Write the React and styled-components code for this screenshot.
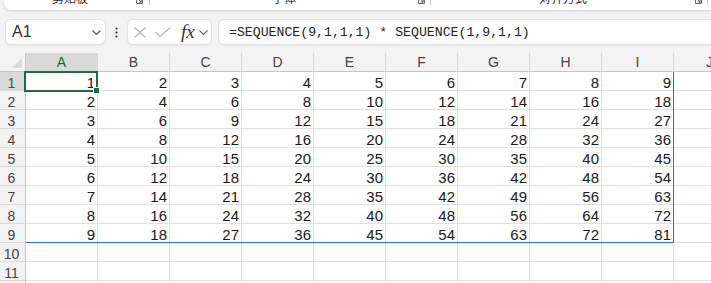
import React from 'react'
import styled, { createGlobalStyle } from 'styled-components'

const GlobalStyle = createGlobalStyle`
  html, body {
    margin: 0;
    padding: 0;
    background: #f3f3f3;
    overflow: hidden;
  }
  body {
    font-family: "Liberation Sans", Arial, sans-serif;
  }
`

const Page = styled.div`
  width: 711px;
  height: 283px;
  overflow: hidden;
  background: #f3f3f3;
`

/* ribbon, only its lower edge shows */
const Ribbon = styled.div`
  display: flex;
  width: 760px;
  height: 10px;
  margin-left: 4px;
  background: #fff;
  border-radius: 0 0 0 7px;
  box-shadow: 0 1px 3px rgba(0, 0, 0, 0.14);
  overflow: hidden;
`
const RibbonGroup = styled.div`
  display: flex;
  align-items: flex-start;
  flex-shrink: 0;
  width: ${p => p.$width}px;
`
const GroupLabel = styled.span`
  flex: 1;
  margin-top: -8px;
  text-align: center;
  font-family: "Noto Sans CJK SC", "Liberation Sans", sans-serif;
  font-size: 12px;
  line-height: 12px;
  color: #333;
`
const Launcher = styled.svg`
  flex-shrink: 0;
  width: 7px;
  height: 7px;
  margin-top: -3px;
  margin-right: ${p => p.$right}px;
`
const GroupDivider = styled.div`
  flex-shrink: 0;
  width: 1px;
  height: 5px;
  background: #c9c9c9;
`

/* formula bar */
const FormulaBar = styled.div`
  display: flex;
  align-items: center;
  height: 26px;
  margin-top: 9px;
  padding-left: 5px;
`
const Field = styled.div`
  display: flex;
  align-items: center;
  flex-shrink: 0;
  box-sizing: border-box;
  height: 26px;
  background: #fff;
  border: 1px solid #e2e2e2;
  border-radius: 6px;
  box-shadow: 0 1px 1px rgba(0, 0, 0, 0.04);
`
const NameBox = styled(Field)`
  width: 101px;
  padding: 0 4px 0 6px;
  justify-content: space-between;
  font-size: 16px;
  color: #333;
`
const DotsSlot = styled.div`
  display: flex;
  justify-content: center;
  width: 21px;
`
const FxBox = styled(Field)`
  width: 85px;
  padding-left: 6px;
`
const Tool = styled.span`
  display: flex;
  align-items: center;
  margin-left: ${p => p.$gap || 0}px;
`
const FxLabel = styled.span`
  font-family: "Liberation Serif", "Times New Roman", serif;
  font-style: italic;
  font-size: 19px;
  line-height: 20px;
  color: #333;
`
const FormulaInput = styled(Field)`
  flex: 1;
  margin-left: 6px;
  margin-right: -20px;
  padding-left: 10px;
  font-family: "Liberation Mono", "Courier New", monospace;
  font-size: 13.2px;
  color: #222;
  white-space: pre;
`

/* sheet */
const Sheet = styled.div`
  display: grid;
  grid-template-columns: 26px repeat(10, 72px);
  grid-template-rows: repeat(13, 19px);
  margin-top: 8px;
  background: #fff;
`
const Corner = styled.div`
  grid-row: 1;
  grid-column: 1;
  display: flex;
  justify-content: flex-end;
  align-items: flex-end;
  box-sizing: border-box;
  padding: 0 3px 3px 0;
  background: #f3f3f3;
  border-right: 1px solid #c6c6c6;
  border-bottom: 1px solid #c6c6c6;

  &::after {
    content: '';
    width: 0;
    height: 0;
    border-left: 10px solid transparent;
    border-bottom: 10px solid #dadada;
  }
`
const ColHead = styled.div`
  grid-row: 1;
  grid-column: ${p => p.$c};
  display: flex;
  align-items: center;
  justify-content: center;
  box-sizing: border-box;
  background: ${p => (p.$active ? '#d9d9d9' : '#f3f3f3')};
  color: ${p => (p.$active ? '#1b6a3c' : '#444')};
  border-right: 1px solid #dadada;
  border-bottom: 1px solid #c6c6c6;
  font-size: 14px;
`
const RowHead = styled.div`
  grid-row: ${p => p.$r};
  grid-column: 1;
  box-sizing: border-box;
  padding: 3px 2px 0 0;
  text-align: center;
  background: ${p => (p.$active ? '#d9d9d9' : '#f3f3f3')};
  color: ${p => (p.$active ? '#1b6a3c' : '#444')};
  border-right: 1px solid #c6c6c6;
  border-bottom: 1px solid #dadada;
  font-size: 14px;
  line-height: 16px;
`
const Cell = styled.div`
  grid-row: ${p => p.$r};
  grid-column: ${p => p.$c};
  box-sizing: border-box;
  padding: 3px 2px 0 0;
  text-align: right;
  border-right: 1px solid #e1e1e1;
  border-bottom: 1px solid #e1e1e1;
  font-size: 15px;
  line-height: 16px;
  color: #1a1a1a;
  white-space: nowrap;
`
const SpillRange = styled.div`
  grid-row: 2 / 11;
  grid-column: 2 / 11;
  border-right: 1px solid #3a6fb8;
  border-bottom: 1px solid #3a6fb8;
  box-shadow: 0 3px 3px -2px rgba(0, 0, 0, 0.12);
  pointer-events: none;
`
const Selection = styled.div`
  grid-row: 2;
  grid-column: 2;
  position: relative;
  margin: -1px 0 -1px -2px;
  border: 2px solid #1e6b40;
  pointer-events: none;
`
const FillHandle = styled.span`
  position: absolute;
  right: -4px;
  bottom: -4px;
  width: 5px;
  height: 5px;
  background: #1e6b40;
  border: 1px solid #fff;
`

const Chevron = ({ color = '#555' }) => (
  <svg width="9" height="5" viewBox="0 0 9 5">
    <polyline points="0.5,0.5 4.5,4.5 8.5,0.5" fill="none" stroke={color} strokeWidth="1.1" />
  </svg>
)

const LauncherIcon = ({ right }) => (
  <Launcher $right={right} viewBox="0 0 7 7">
    <path d="M0.5 0.5V6.5H6.5V0.5" fill="none" stroke="#666" strokeWidth="1" />
    <path d="M2 2L5.2 5.2M5.2 3V5.2H3" fill="none" stroke="#666" strokeWidth="1" />
  </Launcher>
)

const columns = ['A', 'B', 'C', 'D', 'E', 'F', 'G', 'H', 'I', 'J']
const rows = Array.from({ length: 12 }, (_, i) => i + 1)

const App = () => {
  return (
    <Page>
      <GlobalStyle />
      <Ribbon>
        <RibbonGroup $width={145}>
          <GroupLabel>剪贴板</GroupLabel>
          <LauncherIcon right={6} />
        </RibbonGroup>
        <GroupDivider />
        <RibbonGroup $width={280}>
          <GroupLabel>字体</GroupLabel>
          <LauncherIcon right={5} />
        </RibbonGroup>
        <GroupDivider />
        <RibbonGroup $width={276}>
          <GroupLabel>对齐方式</GroupLabel>
          <LauncherIcon right={5} />
        </RibbonGroup>
        <GroupDivider />
      </Ribbon>

      <FormulaBar>
        <NameBox>
          <span>A1</span>
          <Chevron />
        </NameBox>
        <DotsSlot>
          <svg width="3" height="11" viewBox="0 0 3 11">
            <circle cx="1.5" cy="1.5" r="1.1" fill="#333" />
            <circle cx="1.5" cy="5.5" r="1.1" fill="#333" />
            <circle cx="1.5" cy="9.5" r="1.1" fill="#333" />
          </svg>
        </DotsSlot>
        <FxBox>
          <Tool>
            <svg width="12" height="11" viewBox="0 0 12 11">
              <path d="M0.5 0.5L11.5 10.5M11.5 0.5L0.5 10.5" stroke="#b3b3b3" strokeWidth="1.1" fill="none" />
            </svg>
          </Tool>
          <Tool $gap={9}>
            <svg width="16" height="10" viewBox="0 0 16 10">
              <polyline points="0.5,5 5,9.3 15.5,0.5" stroke="#b3b3b3" strokeWidth="1.1" fill="none" />
            </svg>
          </Tool>
          <Tool $gap={10}>
            <FxLabel>fx</FxLabel>
          </Tool>
          <Tool $gap={4}>
            <Chevron color="#666" />
          </Tool>
        </FxBox>
        <FormulaInput>=SEQUENCE(9,1,1,1) * SEQUENCE(1,9,1,1)</FormulaInput>
      </FormulaBar>

      <Sheet>
        <Corner />
        {columns.map((name, i) => (
          <ColHead key={name} $c={i + 2} $active={i === 0}>
            {name}
          </ColHead>
        ))}
        {rows.map(r => (
          <React.Fragment key={r}>
            <RowHead $r={r + 1} $active={r === 1}>
              {r}
            </RowHead>
            {columns.map((name, i) => (
              <Cell key={name} $r={r + 1} $c={i + 2}>
                {r <= 9 && i < 9 ? r * (i + 1) : ''}
              </Cell>
            ))}
          </React.Fragment>
        ))}
        <SpillRange />
        <Selection>
          <FillHandle />
        </Selection>
      </Sheet>
    </Page>
  )
}

export default App
